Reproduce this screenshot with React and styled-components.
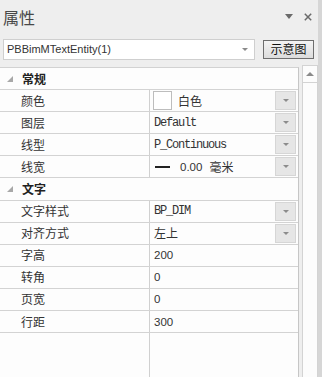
import React from 'react';
import styled, { createGlobalStyle } from 'styled-components';

const CJK = `"Noto Sans CJK SC", "Noto Sans", sans-serif`;
const SANS = `"Liberation Sans", "Noto Sans CJK SC", sans-serif`;
const MONO = `"Liberation Mono", "Noto Sans CJK SC", monospace`;

const Global = createGlobalStyle`
  html, body { margin: 0; padding: 0; background: #eeeeee; }
  body { width: 322px; height: 377px; overflow: hidden; }
  * { box-sizing: border-box; }
`;

const Window = styled.div`
  display: flex;
  width: 322px;
  height: 377px;
  background: #eeeeee;
`;

const Main = styled.div`
  display: flex;
  flex-direction: column;
  width: 318px;
  height: 100%;
`;

const Edge = styled.div`
  width: 4px;
  background: #d6d6d6;
`;

const TitleBar = styled.div`
  height: 33px;
  display: flex;
  align-items: center;
  padding: 0 6px 0 3px;
  background: #eeeeee;
`;

const Title = styled.div`
  font-family: ${CJK};
  font-size: 16px;
  line-height: 18px;
  color: #484848;
`;

const TitleIcons = styled.div`
  margin-left: auto;
  display: flex;
  align-items: center;
  gap: 11px;
`;

const Toolbar = styled.div`
  height: 32px;
  display: flex;
  align-items: center;
  padding: 0 4px 0 3px;
  background: #eeeeee;
`;

const Combo = styled.div`
  width: 252px;
  height: 21px;
  display: flex;
  align-items: center;
  padding: 0 6px 0 3px;
  background: #ffffff;
  border: 1px solid #cfcfcf;
  font-family: ${SANS};
  font-size: 11px;
  color: #333333;
`;

const ComboArrow = styled.span`
  margin-left: auto;
  width: 0;
  height: 0;
  border-left: 3px solid transparent;
  border-right: 3px solid transparent;
  border-top: 3px solid #8a8a8a;
`;

const Button = styled.div`
  margin-left: 8px;
  width: 51px;
  height: 19px;
  display: flex;
  align-items: center;
  justify-content: center;
  border: 1px solid #6e6e6e;
  background: linear-gradient(#f4f4f4, #dcdcdc);
  font-family: ${CJK};
  font-size: 12px;
  line-height: 14px;
  color: #111111;
`;

const Body = styled.div`
  flex: 1;
  display: flex;
  min-height: 0;
`;

const Grid = styled.div`
  width: 299px;
  margin-top: 2px;
  display: flex;
  flex-direction: column;
  background: #fdfdfd;
  border-top: 1px solid #d2d2d2;
  border-right: 1px solid #c6c6c6;
`;

const Gap = styled.div`
  width: 3px;
  background: #eeeeee;
`;

const ScrollBar = styled.div`
  width: 16px;
  display: flex;
  flex-direction: column;
  background: #fcfcfc;
  border: 1px solid #d3d3d3;
  border-bottom: none;
`;

const ScrollUp = styled.div`
  height: 17px;
  display: flex;
  align-items: center;
  justify-content: center;
  border-bottom: 1px solid #d3d3d3;
`;

const CatRow = styled.div`
  height: 22.1px;
  flex: none;
  display: flex;
  align-items: center;
  border-bottom: 1px solid #d3d3d3;
  padding-left: 7px;
`;

const CatTitle = styled.span`
  margin-left: 9px;
  font-family: ${CJK};
  font-weight: 700;
  font-size: 12px;
  line-height: 14px;
  color: #222222;
`;

const Row = styled.div`
  height: 22.1px;
  flex: none;
  display: flex;
  border-bottom: 1px solid #d3d3d3;
`;

const Name = styled.div`
  width: 150px;
  flex: none;
  display: flex;
  align-items: center;
  padding-left: 21px;
  border-right: 1px solid #d0d0d0;
  font-family: ${CJK};
  font-size: 12px;
  line-height: 14px;
  color: #333333;
`;

const Value = styled.div`
  flex: 1;
  display: flex;
  align-items: center;
  padding-left: ${p => (p.$swatch ? 3 : 4)}px;
  font-family: ${p => (p.$kind === 'mono' ? MONO : p.$kind === 'num' ? SANS : CJK)};
  font-size: ${p => (p.$kind === 'num' ? '11.5px' : '12px')};
  letter-spacing: ${p => (p.$kind === 'mono' ? '-1.2px' : '0')};
  line-height: 14px;
  color: #333333;
`;

const DropBtn = styled.div`
  margin-left: auto;
  margin-right: 2px;
  width: 21px;
  height: 19px;
  display: flex;
  align-items: center;
  justify-content: center;
  background: #e6e6e6;
  border: 1px solid #d6d6d6;
`;

const DropTri = styled.span`
  width: 0;
  height: 0;
  border-left: 3px solid transparent;
  border-right: 3px solid transparent;
  border-top: 3px solid #8c8c8c;
`;

const Swatch = styled.span`
  width: 19px;
  height: 19px;
  background: #ffffff;
  border: 1px solid #bdbdbd;
  margin-right: 6px;
`;

const LineSample = styled.span`
  width: 15px;
  height: 2px;
  background: #222222;
  margin: 0 10px 0 1px;
`;

const Unit = styled.span`
  font-family: ${CJK};
  font-size: 12px;
  margin-left: 7px;
`;

const Filler = styled.div`
  flex: 1;
  display: flex;
`;

const FillerName = styled.div`
  width: 150px;
  border-right: 1px solid #d0d0d0;
`;

const Tri = () => (
  <svg width="6" height="6" viewBox="0 0 6 6">
    <polygon points="6,0 6,6 0,6" fill="#a8a8a8" />
  </svg>
);

const Drop = () => (
  <DropBtn>
    <DropTri />
  </DropBtn>
);

const general = [
  { name: '颜色', swatch: true, value: '白色', drop: true },
  { name: '图层', value: 'Default', kind: 'mono', drop: true },
  { name: '线型', value: 'P_Continuous', kind: 'mono', drop: true },
  { name: '线宽', line: true, drop: true },
];

const text = [
  { name: '文字样式', value: 'BP_DIM', kind: 'mono', drop: true },
  { name: '对齐方式', value: '左上', drop: true },
  { name: '字高', value: '200', kind: 'num' },
  { name: '转角', value: '0', kind: 'num' },
  { name: '页宽', value: '0', kind: 'num' },
  { name: '行距', value: '300', kind: 'num' },
];

const PropRow = ({ p }) => (
  <Row>
    <Name>{p.name}</Name>
    {p.line ? (
      <Value $kind="num">
        <LineSample />
        0.00
        <Unit>毫米</Unit>
        {p.drop && <Drop />}
      </Value>
    ) : (
      <Value $kind={p.kind} $swatch={p.swatch}>
        {p.swatch && <Swatch />}
        {p.value}
        {p.drop && <Drop />}
      </Value>
    )}
  </Row>
);

export default function App() {
  return (
    <>
      <Global />
      <Window>
        <Main>
          <TitleBar>
            <Title>属性</Title>
            <TitleIcons>
              <svg width="8" height="5" viewBox="0 0 8 5">
                <polygon points="0,0 8,0 4,5" fill="#6a6a6a" />
              </svg>
              <svg width="8" height="8" viewBox="0 0 8 8">
                <path d="M0.8 0.8 L7.2 7.2 M7.2 0.8 L0.8 7.2" stroke="#6a6a6a" strokeWidth="1.5" />
              </svg>
            </TitleIcons>
          </TitleBar>
          <Toolbar>
            <Combo>
              PBBimMTextEntity(1)
              <ComboArrow />
            </Combo>
            <Button>示意图</Button>
          </Toolbar>
          <Body>
            <Grid>
              <CatRow>
                <Tri />
                <CatTitle>常规</CatTitle>
              </CatRow>
              {general.map(p => (
                <PropRow key={p.name} p={p} />
              ))}
              <CatRow>
                <Tri />
                <CatTitle>文字</CatTitle>
              </CatRow>
              {text.map(p => (
                <PropRow key={p.name} p={p} />
              ))}
              <Filler>
                <FillerName />
              </Filler>
            </Grid>
            <Gap />
            <ScrollBar>
              <ScrollUp>
                <svg width="8" height="4" viewBox="0 0 8 4">
                  <polygon points="0,4 8,4 4,0" fill="#8a8a8a" />
                </svg>
              </ScrollUp>
            </ScrollBar>
          </Body>
        </Main>
        <Edge />
      </Window>
    </>
  );
}
